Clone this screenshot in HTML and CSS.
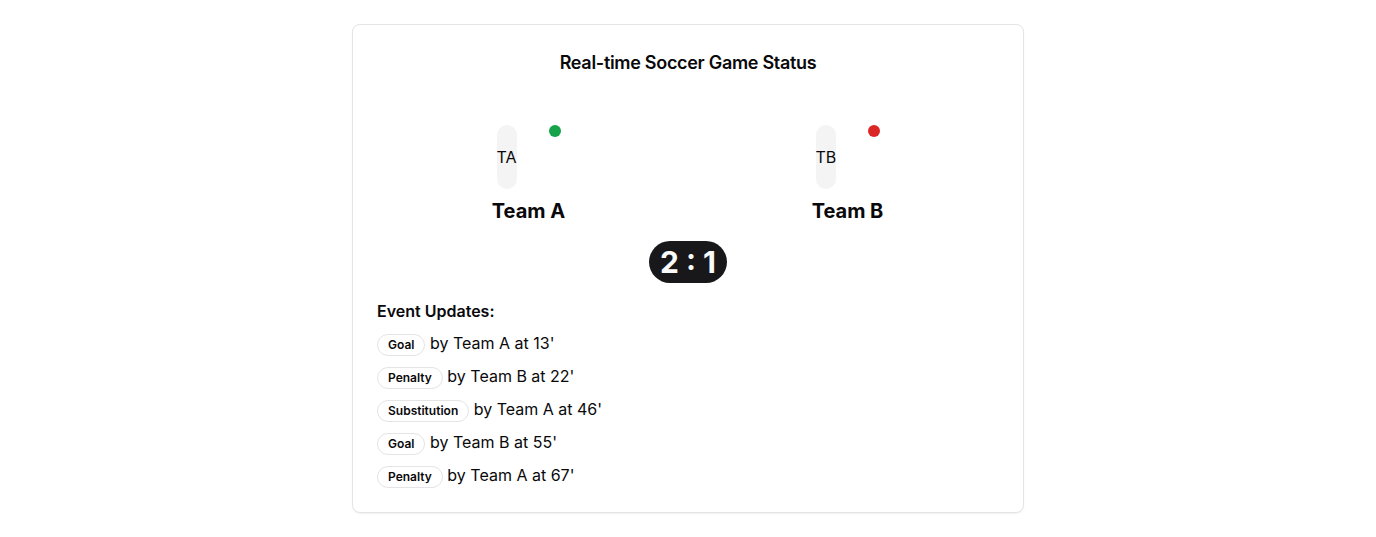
FILE: index.html
```html
<!DOCTYPE html>
<html lang="en">
<head>
<meta charset="utf-8">
<title>Real-time Soccer Game Status</title>
<link rel="stylesheet" href="styles.css">
</head>
<body>
<div class="card">
  <div class="card-header">
    <h3 class="card-title">Real-time Soccer Game Status</h3>
  </div>
  <div class="card-content">
    <div class="teams">
      <div class="team">
        <div class="team-top">
          <div class="avatar">TA</div>
          <span class="dot dot-green"></span>
        </div>
        <div class="team-name">Team A</div>
      </div>
      <div class="team">
        <div class="team-top">
          <div class="avatar">TB</div>
          <span class="dot dot-red"></span>
        </div>
        <div class="team-name">Team B</div>
      </div>
    </div>
    <div class="score-wrap">
      <span class="score">2 : 1</span>
    </div>
    <div class="events">
      <h4 class="events-title">Event Updates:</h4>
      <ul class="event-list">
        <li class="event"><span class="tag">Goal</span> by Team A at 13'</li>
        <li class="event"><span class="tag">Penalty</span> by Team B at 22'</li>
        <li class="event"><span class="tag">Substitution</span> by Team A at 46'</li>
        <li class="event"><span class="tag">Goal</span> by Team B at 55'</li>
        <li class="event"><span class="tag">Penalty</span> by Team A at 67'</li>
      </ul>
    </div>
  </div>
</div>
</body>
</html>
```

FILE: styles.css
```css
* { box-sizing: border-box; }

body {
  margin: 0;
  padding: 24px 0;
  background: #ffffff;
  color: #09090b;
  font-family: Inter, "Liberation Sans", sans-serif;
}

.card {
  width: 672px;
  margin: 0 auto;
  border: 1px solid #e4e4e7;
  border-radius: 8px;
  background: #ffffff;
  box-shadow: 0 1px 2px rgba(0, 0, 0, 0.05);
}

.card-header {
  padding: 24px 24px 23px;
}

.card-title {
  margin: 0;
  text-align: center;
  font-size: 18px;
  line-height: 28px;
  font-weight: 600;
  letter-spacing: -0.3px;
}

.card-content {
  padding: 0 24px 24px;
}

.teams {
  display: grid;
  grid-template-columns: 1fr 1fr;
  gap: 16px;
  padding-top: 25px;
}

.team {
  display: flex;
  flex-direction: column;
  align-items: center;
}

.team-top {
  display: flex;
  justify-content: space-between;
  align-items: flex-start;
  width: 64px;
  height: 64px;
}

.avatar {
  display: flex;
  align-items: center;
  justify-content: center;
  width: min-content;
  height: 64px;
  border-radius: 9999px;
  background: #f4f4f5;
  font-size: 16px;
  line-height: 24px;
  white-space: nowrap;
}

.dot {
  flex-shrink: 0;
  width: 12px;
  height: 12px;
  border-radius: 50%;
}

.dot-green { background: #16a34a; }
.dot-red { background: #dc2626; }

.team-name {
  margin-top: 8px;
  font-size: 20px;
  line-height: 28px;
  font-weight: 700;
}

.score-wrap {
  display: flex;
  justify-content: center;
  margin-top: 16px;
}

.score {
  display: inline-flex;
  align-items: center;
  padding: 2px 10px;
  border: 1px solid transparent;
  border-radius: 9999px;
  background: #18181b;
  color: #fafafa;
  font-size: 30px;
  line-height: 36px;
  font-weight: 700;
}

.events {
  margin-top: 16px;
}

.events-title {
  margin: 0;
  font-size: 16px;
  line-height: 24px;
  font-weight: 600;
}

.event-list {
  list-style: none;
  margin: 8px 0 0;
  padding: 0;
  display: flex;
  flex-direction: column;
  gap: 8px;
}

.event {
  font-size: 16px;
  line-height: 25px;
}

.tag {
  display: inline-block;
  padding: 2px 10px;
  border: 1px solid #e4e4e7;
  border-radius: 9999px;
  font-size: 12px;
  line-height: 16px;
  font-weight: 600;
}
```
